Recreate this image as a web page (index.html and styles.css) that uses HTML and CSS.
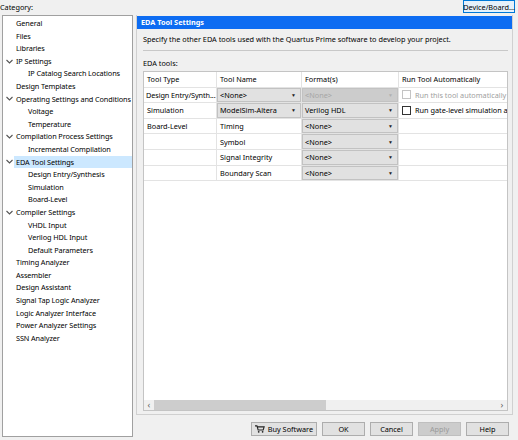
FILE: index.html
```html
<!DOCTYPE html>
<html lang="en">
<head>
  <meta charset="UTF-8">
  <title>Settings</title>
  <link rel="stylesheet" href="styles.css">
</head>
<body>
  <div class="top">
    <span class="cat">Category:</span>
    <button class="btn focus">Device/Board...</button>
  </div>
  <div class="main">
    <div class="tree">
      <div class="item"><span class="chev"></span><span class="label">General</span></div>
      <div class="item"><span class="chev"></span><span class="label">Files</span></div>
      <div class="item"><span class="chev"></span><span class="label">Libraries</span></div>
      <div class="item"><span class="chev"><svg width="7" height="5" viewBox="0 0 7 5"><path d="M0.5 1 L3.5 4 L6.5 1" fill="none" stroke="#555" stroke-width="1.1"/></svg></span><span class="label">IP Settings</span></div>
      <div class="item sub"><span class="chev"></span><span class="label">IP Catalog Search Locations</span></div>
      <div class="item"><span class="chev"></span><span class="label">Design Templates</span></div>
      <div class="item"><span class="chev"><svg width="7" height="5" viewBox="0 0 7 5"><path d="M0.5 1 L3.5 4 L6.5 1" fill="none" stroke="#555" stroke-width="1.1"/></svg></span><span class="label">Operating Settings and Conditions</span></div>
      <div class="item sub"><span class="chev"></span><span class="label">Voltage</span></div>
      <div class="item sub"><span class="chev"></span><span class="label">Temperature</span></div>
      <div class="item"><span class="chev"><svg width="7" height="5" viewBox="0 0 7 5"><path d="M0.5 1 L3.5 4 L6.5 1" fill="none" stroke="#555" stroke-width="1.1"/></svg></span><span class="label">Compilation Process Settings</span></div>
      <div class="item sub"><span class="chev"></span><span class="label">Incremental Compilation</span></div>
      <div class="item"><span class="chev"><svg width="7" height="5" viewBox="0 0 7 5"><path d="M0.5 1 L3.5 4 L6.5 1" fill="none" stroke="#555" stroke-width="1.1"/></svg></span><span class="label selected">EDA Tool Settings</span></div>
      <div class="item sub"><span class="chev"></span><span class="label">Design Entry/Synthesis</span></div>
      <div class="item sub"><span class="chev"></span><span class="label">Simulation</span></div>
      <div class="item sub"><span class="chev"></span><span class="label">Board-Level</span></div>
      <div class="item"><span class="chev"><svg width="7" height="5" viewBox="0 0 7 5"><path d="M0.5 1 L3.5 4 L6.5 1" fill="none" stroke="#555" stroke-width="1.1"/></svg></span><span class="label">Compiler Settings</span></div>
      <div class="item sub"><span class="chev"></span><span class="label">VHDL Input</span></div>
      <div class="item sub"><span class="chev"></span><span class="label">Verilog HDL Input</span></div>
      <div class="item sub"><span class="chev"></span><span class="label">Default Parameters</span></div>
      <div class="item"><span class="chev"></span><span class="label">Timing Analyzer</span></div>
      <div class="item"><span class="chev"></span><span class="label">Assembler</span></div>
      <div class="item"><span class="chev"></span><span class="label">Design Assistant</span></div>
      <div class="item"><span class="chev"></span><span class="label">Signal Tap Logic Analyzer</span></div>
      <div class="item"><span class="chev"></span><span class="label">Logic Analyzer Interface</span></div>
      <div class="item"><span class="chev"></span><span class="label">Power Analyzer Settings</span></div>
      <div class="item"><span class="chev"></span><span class="label">SSN Analyzer</span></div>
    </div>

    <div class="right">
      <div class="panel">
        <div class="panel-title">EDA Tool Settings</div>
        <div class="panel-body">
          <div class="desc">Specify the other EDA tools used with the Quartus Prime software to develop your project.</div>
          <div class="sep"></div>
          <div class="sub-title">EDA tools:</div>
          <div class="table">
            <div class="grid">
              <div class="cell head">Tool Type</div>
              <div class="cell head">Tool Name</div>
              <div class="cell head">Format(s)</div>
              <div class="cell head">Run Tool Automatically</div>

              <div class="cell tight">Design Entry/Synth...</div>
              <div class="cell"><div class="combo">&lt;None&gt;<span class="arrow">&#9660;</span></div></div>
              <div class="cell"><div class="combo disabled">&lt;None&gt;<span class="arrow">&#9660;</span></div></div>
              <div class="cell"><span class="check disabled"></span><span class="clip dim">Run this tool automatically to s</span></div>

              <div class="cell">Simulation</div>
              <div class="cell"><div class="combo">ModelSim-Altera<span class="arrow">&#9660;</span></div></div>
              <div class="cell"><div class="combo">Verilog HDL<span class="arrow">&#9660;</span></div></div>
              <div class="cell"><span class="check"></span><span class="clip">Run gate-level simulation auto</span></div>

              <div class="cell">Board-Level</div>
              <div class="cell">Timing</div>
              <div class="cell"><div class="combo">&lt;None&gt;<span class="arrow">&#9660;</span></div></div>
              <div class="cell"></div>

              <div class="cell"></div>
              <div class="cell">Symbol</div>
              <div class="cell"><div class="combo">&lt;None&gt;<span class="arrow">&#9660;</span></div></div>
              <div class="cell"></div>

              <div class="cell"></div>
              <div class="cell">Signal Integrity</div>
              <div class="cell"><div class="combo">&lt;None&gt;<span class="arrow">&#9660;</span></div></div>
              <div class="cell"></div>

              <div class="cell"></div>
              <div class="cell">Boundary Scan</div>
              <div class="cell"><div class="combo">&lt;None&gt;<span class="arrow">&#9660;</span></div></div>
              <div class="cell"></div>
            </div>
            <div class="hscroll">
              <span class="sarrow">&#8249;</span>
              <div class="track"><div class="thumb"></div></div>
              <span class="sarrow">&#8250;</span>
            </div>
          </div>
        </div>
      </div>
      <div class="buttons">
        <button class="btn wide"><svg width="10" height="8" viewBox="0 0 10 8"><path d="M0 0.8 H2 L3.2 5 H8.4 L9.4 1.8 H2.6" fill="none" stroke="#222" stroke-width="1.1"/><circle cx="3.8" cy="6.9" r="0.9" fill="#222"/><circle cx="7.8" cy="6.9" r="0.9" fill="#222"/></svg>Buy Software</button>
        <button class="btn">OK</button>
        <button class="btn">Cancel</button>
        <button class="btn disabled">Apply</button>
        <button class="btn">Help</button>
      </div>
    </div>
  </div>
</body>
</html>
```

FILE: styles.css
```css
body {
  margin: 0;
  background: #f0f0f0;
  font-family: "Noto Sans", "Open Sans", sans-serif;
  font-size: 7.3px;
  color: #000;
  width: 518px;
  height: 440px;
  overflow: hidden;
}
.top {
  display: flex;
  justify-content: space-between;
  align-items: flex-start;
  height: 15px;
  padding-right: 3px;
}
.cat {
  line-height: 12px;
  padding-top: 1px;
}
.btn {
  font: inherit;
  background: #e1e1e1;
  border: 1px solid #adadad;
  height: 14px;
  padding: 0 3px;
  display: flex;
  align-items: center;
  justify-content: center;
  gap: 3px;
  color: #000;
  white-space: nowrap;
}
.btn.focus {
  height: 13px;
  border-color: #0078d7;
  background: #e5f1fb;
  width: 52px;
}
.btn.disabled {
  background: #cccccc;
  border-color: #bfbfbf;
  color: #9a9a9a;
}
.main {
  display: flex;
  gap: 3px;
}
.tree {
  width: 129px;
  height: 419px;
  margin-left: 2px;
  background: #fff;
  border: 1px solid #a0a0a0;
  padding-top: 1px;
}
.item {
  display: flex;
  height: 12.6px;
  align-items: center;
  line-height: 12.6px;
}
.chev {
  width: 10px;
  flex: none;
  display: flex;
  justify-content: center;
  padding-left: 1px;
}
.item.sub .chev {
  width: 22px;
}
.label {
  flex: 1;
  padding-left: 2px;
  white-space: nowrap;
  letter-spacing: -0.1px;
}
.label.selected {
  background: #cce8ff;
}
.right {
  width: 377px;
  display: flex;
  flex-direction: column;
}
.panel {
  height: 399px;
  border: 1px solid #d0d0d0;
  border-top: none;
  display: flex;
  flex-direction: column;
}
.panel-title {
  background: #0d6cf2;
  color: #fff;
  font-weight: bold;
  height: 13px;
  line-height: 13px;
  padding-left: 4px;
  margin-top: 1px;
}
.panel-body {
  padding: 0 4px 0 6px;
  flex: 1;
  display: flex;
  flex-direction: column;
}
.desc {
  margin-top: 4px;
  line-height: 12px;
}
.sep {
  border-top: 1px solid #c8c8c8;
  margin: 5px 0 0 0;
}
.sub-title {
  margin-top: 6px;
  line-height: 12px;
}
.table {
  margin-top: 2px;
  flex: 1;
  background: #fff;
  border: 1px solid #c4c4c4;
  display: flex;
  flex-direction: column;
  justify-content: space-between;
  overflow: hidden;
  margin-bottom: 3px;
}
.grid {
  display: grid;
  grid-template-columns: 73px 85px 97px 110px;
  grid-auto-rows: 15.6px;
}
.cell {
  border-right: 1px solid #e3e3e3;
  border-bottom: 1px solid #e3e3e3;
  display: flex;
  align-items: center;
  padding-left: 3px;
  white-space: nowrap;
  overflow: hidden;
  box-sizing: border-box;
}
.cell.tight {
  padding-left: 2px;
  letter-spacing: -0.1px;
}
.cell:nth-child(4n) {
  border-right: none;
}
.cell:has(.combo) {
  padding: 0;
}
.combo {
  width: 100%;
  height: 100%;
  box-sizing: border-box;
  background: #e1e1e1;
  border: 1px solid #c2c2c2;
  display: flex;
  align-items: center;
  padding-left: 2px;
  justify-content: space-between;
}
.combo.disabled {
  background: #cccccc;
  color: #a6a6a6;
}
.arrow {
  font-size: 5px;
  padding-right: 4px;
  color: #222;
}
.combo.disabled .arrow {
  color: #b0b0b0;
}
.check {
  width: 7px;
  height: 7px;
  border: 1px solid #333;
  background: #fff;
  flex: none;
  margin-right: 4px;
}
.check.disabled {
  border-color: #c4c4c4;
}
.clip {
  white-space: nowrap;
}
.dim {
  color: #a0a0a0;
}
.hscroll {
  height: 10px;
  background: #f0f0f0;
  display: flex;
  align-items: center;
}
.sarrow {
  width: 10px;
  text-align: center;
  font-size: 9px;
  line-height: 10px;
  color: #606060;
}
.track {
  flex: 1;
  height: 10px;
}
.thumb {
  width: 172px;
  height: 10px;
  background: #cdcdcd;
}
.buttons {
  display: flex;
  justify-content: flex-end;
  gap: 5px;
  margin-top: 7px;
  padding-right: 4px;
}
.buttons .btn {
  width: 43px;
}
.buttons .btn.wide {
  width: 66px;
}
```
